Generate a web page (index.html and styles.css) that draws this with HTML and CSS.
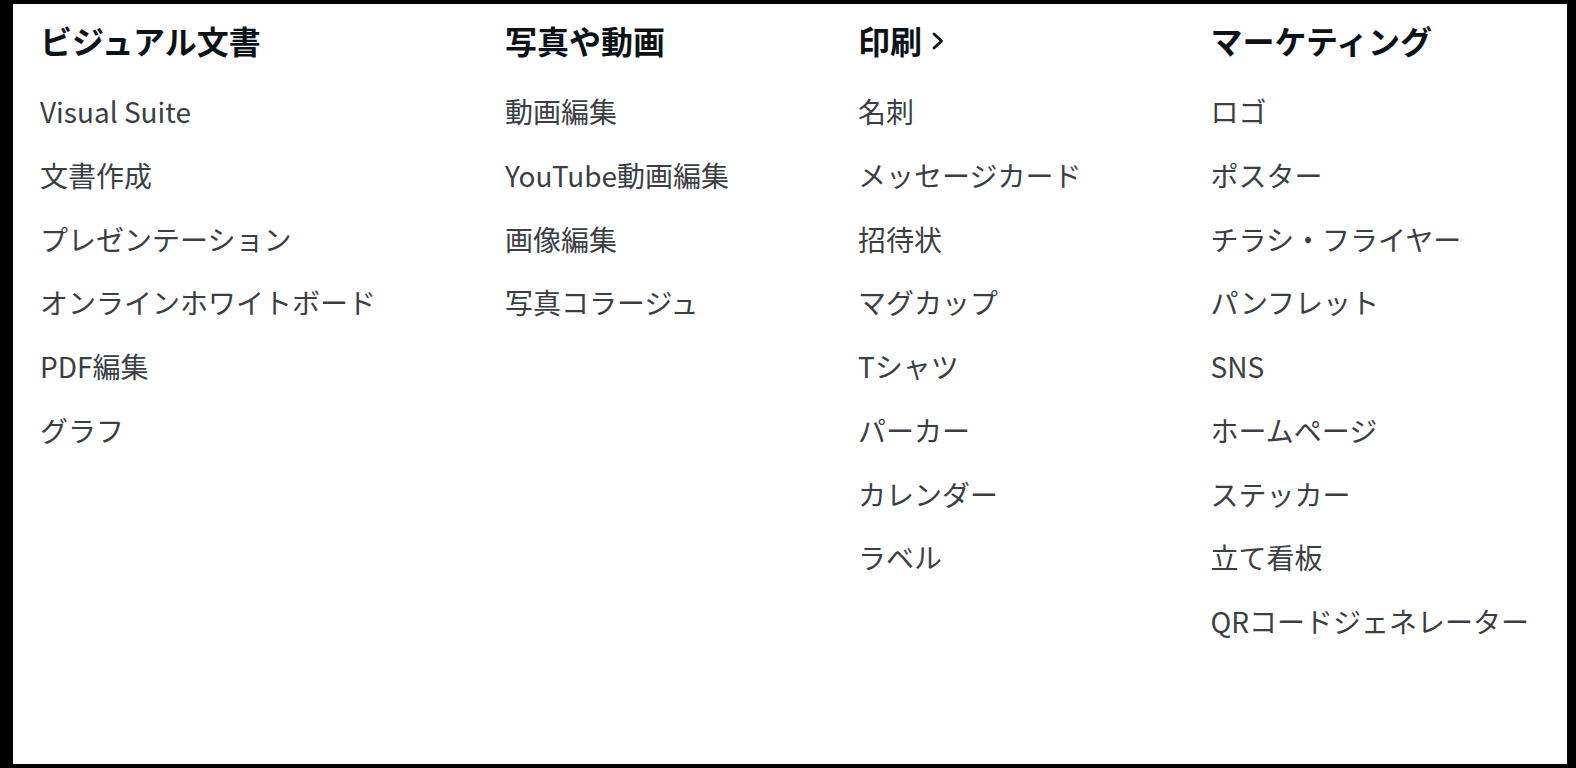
FILE: index.html
```html
<!DOCTYPE html>
<html lang="ja">
<head>
<meta charset="utf-8">
<title>Menu</title>
<link rel="stylesheet" href="styles.css">
</head>
<body>
<div class="panel">
  <div class="col">
    <h2 class="head">ビジュアル文書</h2>
    <ul class="list">
      <li>Visual Suite</li>
      <li>文書作成</li>
      <li>プレゼンテーション</li>
      <li>オンラインホワイトボード</li>
      <li>PDF編集</li>
      <li>グラフ</li>
    </ul>
  </div>
  <div class="col">
    <h2 class="head">写真や動画</h2>
    <ul class="list">
      <li>動画編集</li>
      <li>YouTube動画編集</li>
      <li>画像編集</li>
      <li>写真コラージュ</li>
    </ul>
  </div>
  <div class="col">
    <h2 class="head">印刷<svg class="chev" width="16" height="24" viewBox="0 0 16 24"><path d="M4 5 L11.5 12 L4 19" fill="none" stroke="#0d1216" stroke-width="2.8" stroke-linecap="round" stroke-linejoin="round"/></svg></h2>
    <ul class="list">
      <li>名刺</li>
      <li>メッセージカード</li>
      <li>招待状</li>
      <li>マグカップ</li>
      <li>Tシャツ</li>
      <li>パーカー</li>
      <li>カレンダー</li>
      <li>ラベル</li>
    </ul>
  </div>
  <div class="col">
    <h2 class="head">マーケティング</h2>
    <ul class="list">
      <li>ロゴ</li>
      <li>ポスター</li>
      <li>チラシ・フライヤー</li>
      <li>パンフレット</li>
      <li>SNS</li>
      <li>ホームページ</li>
      <li>ステッカー</li>
      <li>立て看板</li>
      <li>QRコードジェネレーター</li>
    </ul>
  </div>
</div>
</body>
</html>
```
FILE: styles.css
```css
html, body {
  margin: 0;
  padding: 0;
  background: #000;
}
body {
  padding: 4px 9px 4px 13px;
  height: 768px;
  box-sizing: border-box;
  font-family: "Noto Sans CJK JP", "Noto Sans", sans-serif;
}
.panel {
  background: #fff;
  height: 760px;
  box-sizing: border-box;
  padding: 12px 0 0 27px;
  display: flex;
  gap: 129px;
  align-items: flex-start;
}
.col {
  display: flex;
  flex-direction: column;
}
.head {
  margin: 0;
  font-size: 32px;
  font-weight: 700;
  line-height: 48px;
  color: #0d1216;
  display: flex;
  align-items: center;
  gap: 8px;
  white-space: nowrap;
}
.chev {
  display: block;
  margin-top: 2px;
}
.list {
  list-style: none;
  margin: 16px 0 0;
  padding: 0;
}
.list li {
  font-size: 28px;
  line-height: 63.75px;
  height: 63.75px;
  color: #3b3e43;
  white-space: nowrap;
}
```
